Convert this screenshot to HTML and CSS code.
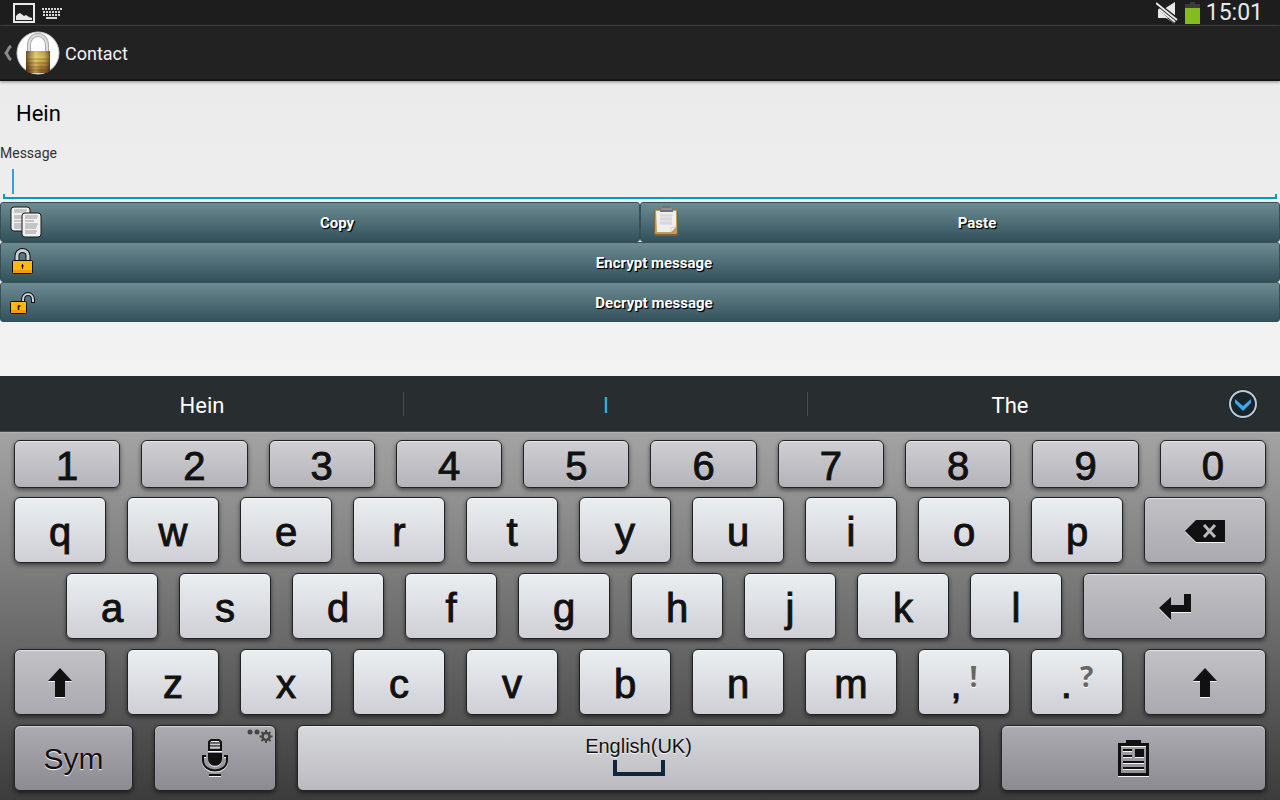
FILE: index.html
```html
<!DOCTYPE html>
<html lang="en">
<head>
<meta charset="utf-8">
<meta name="viewport" content="width=device-width, initial-scale=1">
<title>Contact</title>
<link rel="stylesheet" href="styles.css">
</head>
<body>
<div class="status-bar">
  <svg class="status-picture" width="22" height="20" viewBox="0 0 22 20"><path d="M1 1h20v18H1z" fill="none" stroke="#e8e8e8" stroke-width="2"/><path d="M3 17v-4l2-2 2-1 4 3 2-1 3 2 3 1v2z" fill="#e8e8e8"/></svg>
  <svg class="status-keyboard" width="20" height="12" viewBox="0 0 20 12" stroke="#d8d8d8" stroke-width="2"><path d="M0 2h20M1 5h18M1 8h18" stroke-dasharray="2 1"/><path d="M4 11h11"/></svg>
  <svg class="status-mute" width="22" height="22" viewBox="0 0 22 22"><path d="M2 7h6l11-7v22l-9-6H2z" fill="#e8e8e8"/><path d="M0 3L22 20" stroke="#1d1d1d" stroke-width="7"/><path d="M0 1l21 17M3 7l16 13" stroke="#e8e8e8" stroke-width="2"/><path d="M2 7l10 9H2z" fill="#e8e8e8"/></svg>
  <svg class="status-battery" width="15" height="22" viewBox="0 0 15 22"><path d="M0 2h5V0h5v2h5v5H0z" fill="#3b3b3b"/><path d="M0 6h15v16H0z" fill="#84bd17"/></svg>
  <time class="clock">15:01</time>
</div>
<header class="action-bar">
  <button class="back" type="button" aria-label="Back">
    <svg width="8" height="16" viewBox="0 0 8 16"><path d="M7 1C4 3 4 6 2 8c2 2 2 5 5 7" fill="none" stroke="#8b8b8b" stroke-width="3"/></svg>
    <svg width="44" height="44" viewBox="0 0 44 44">
      <defs>
        <linearGradient id="brass" x2="0" y2="1"><stop offset="0" stop-color="#ac8b35"/><stop offset=".3" stop-color="#cdb14e"/><stop offset=".6" stop-color="#a27623"/><stop offset="1" stop-color="#5a2807"/></linearGradient>
        <linearGradient id="sheen"><stop offset="0" stop-color="#3a1500" stop-opacity=".6"/><stop offset=".4" stop-color="#fff3a0" stop-opacity=".5"/><stop offset=".65" stop-color="#fff3a0" stop-opacity=".2"/><stop offset="1" stop-color="#3a1500" stop-opacity=".6"/></linearGradient>
      </defs>
      <circle cx="22" cy="22" r="21" fill="#fff" stroke="#c9c9c9"/>
      <path d="M13 21v-7a9 10 0 0 1 18 0v7" fill="none" stroke="#a9a9a9" stroke-width="4"/>
      <path d="M13 21v-7a9 10 0 0 1 18 0v7" fill="none" stroke="#dedede" stroke-width="2"/>
      <path d="M10 20h24v20l-3 2H13l-3-2z" fill="url(#brass)"/>
      <path d="M10 20h24v20l-3 2H13l-3-2z" fill="url(#sheen)"/>
      <path d="M10 28h24M10 32h24M10 36h24M10 39h24" stroke="#5e3309" opacity=".4"/>
    </svg>
  </button>
  <h1 class="title">Contact</h1>
</header>
<main class="content">
  <h2 class="contact-name">Hein</h2>
  <label class="message-label" for="message">Message</label>
  <div class="field"><input class="field-input" id="message" type="text"><span class="caret"></span></div>
  <div class="actions">
    <button class="action half" type="button">
      <svg width="32" height="32" viewBox="0 0 32 32"><g fill="#f1f1f1" stroke="#161616"><rect x="1" y="1" width="19" height="24" rx="3"/><path d="M4 4h13M4 6h12M4 10h11M4 12h10M4 15h12M4 18h12M4 20h11M4 22h12" stroke="#999"/><rect x="12" y="7" width="19" height="24" rx="3"/><path d="M15 10h13M15 12h12M15 15h9M15 18h13M15 20h12M15 22h11M15 25h12M15 27h11" stroke="#999"/></g></svg>
      <span class="action-text">Copy</span>
    </button>
    <button class="action half" type="button">
      <svg width="32" height="32" viewBox="0 0 32 32"><rect x="4" y="4" width="24" height="26" rx="2" fill="#806235"/><rect x="5" y="4" width="22" height="24" rx="1" fill="#c29b56"/><path d="M6 5h20v16l-5 5H7z" fill="#eee"/><path d="M10 9h12v10H10z" fill="#e0e0e0"/><path d="M10 9h12M10 13h12M10 17h12" stroke="#d0d0d0"/><path d="M21 26v-4l5-1z" fill="#fff" stroke="#ccc"/><path d="M10 2h3V0h7v2h3v4H10z" fill="#737373"/><path d="M11 3h11" stroke="#aaa"/></svg>
      <span class="action-text">Paste</span>
    </button>
    <button class="action" type="button">
      <svg width="26" height="28" viewBox="0 0 26 28"><g transform="translate(1 0)"><path d="M6 14V8a5 5 0 0 1 11 0v6" fill="none" stroke="#111" stroke-width="5"/><path d="M6 14V8a5 5 0 0 1 11 0v6" fill="none" stroke="#ccd2db" stroke-width="3"/><rect x="1.5" y="12.500" width="20" height="13" rx="1" fill="#ffb90a" stroke="#111"/><path d="M2 22h19v3H2z" fill="#f79a12"/><path d="M11.500 16v5M10 18h3" stroke="#221500"/></g></svg>
      <span class="action-text">Encrypt message</span>
    </button>
    <button class="action" type="button">
      <svg width="26" height="28" viewBox="0 0 26 28"><path d="M13 15v-3c0-8 10-8 10 0v3" fill="none" stroke="#111" stroke-width="4"/><path d="M13 15v-3c0-8 10-8 10 0v2" fill="none" stroke="#ccd2db" stroke-width="2"/><rect x=".5" y="13.500" width="16" height="12" rx="1" fill="#ffb90a" stroke="#111"/><path d="M1 22h15v3H1z" fill="#f79a12"/><path d="M8.500 22v-4h2" fill="none" stroke="#221500" stroke-width="1.500"/></svg>
      <span class="action-text">Decrypt message</span>
    </button>
  </div>
</main>
<div class="suggestions">
  <button class="suggestion" type="button">Hein</button>
  <button class="suggestion current" type="button">I</button>
  <button class="suggestion" type="button">The</button>
  <button class="expand" type="button" aria-label="More suggestions">
    <svg width="30" height="30" viewBox="0 0 30 30"><circle cx="15" cy="15" r="14.500" fill="#0d1519"/><circle cx="15" cy="15" r="13" fill="#18232a" stroke="#bacbd8" stroke-width="2"/><path d="M7 10l8 7 8-7v4l-8 8-8-8z" fill="#36a9ef"/></svg>
  </button>
</div>
<div class="keyboard">
  <div class="row digits">
    <button class="key digit" type="button">1</button><button class="key digit" type="button">2</button><button class="key digit" type="button">3</button><button class="key digit" type="button">4</button><button class="key digit" type="button">5</button><button class="key digit" type="button">6</button><button class="key digit" type="button">7</button><button class="key digit" type="button">8</button><button class="key digit" type="button">9</button><button class="key digit" type="button">0</button>
  </div>
  <div class="row">
    <button class="key" type="button">q</button><button class="key" type="button">w</button><button class="key" type="button">e</button><button class="key" type="button">r</button><button class="key" type="button">t</button><button class="key" type="button">y</button><button class="key" type="button">u</button><button class="key" type="button">i</button><button class="key" type="button">o</button><button class="key" type="button">p</button>
    <button class="key control side" type="button" aria-label="Backspace"><svg width="40" height="22" viewBox="0 0 40 22"><path d="M0 11L11 0h29v22H11z" fill="#111"/><path d="M19 5l11 12M30 5L19 17" stroke="#bab9bf" stroke-width="3"/></svg></button>
  </div>
  <div class="row indented">
    <button class="key" type="button">a</button><button class="key" type="button">s</button><button class="key" type="button">d</button><button class="key" type="button">f</button><button class="key" type="button">g</button><button class="key" type="button">h</button><button class="key" type="button">j</button><button class="key" type="button">k</button><button class="key" type="button">l</button>
    <button class="key control enter" type="button" aria-label="Enter"><svg width="32" height="26" viewBox="0 0 32 26"><path d="M0 14L12 3v8h13V0h7v18H12v8z" fill="#111"/></svg></button>
  </div>
  <div class="row">
    <button class="key control" type="button" aria-label="Shift"><svg width="24" height="30" viewBox="0 0 24 30"><path d="M12 0l12 13h-7v16H7V13H0z" fill="#111"/></svg></button>
    <button class="key" type="button">z</button><button class="key" type="button">x</button><button class="key" type="button">c</button><button class="key" type="button">v</button><button class="key" type="button">b</button><button class="key" type="button">n</button><button class="key" type="button">m</button>
    <button class="key punctuation" type="button"><span>,</span><span class="alternate">!</span></button>
    <button class="key punctuation" type="button"><span>.</span><span class="alternate">?</span></button>
    <button class="key control side" type="button" aria-label="Shift"><svg width="24" height="30" viewBox="0 0 24 30"><path d="M12 0l12 13h-7v16H7V13H0z" fill="#111"/></svg></button>
  </div>
  <div class="row">
    <button class="key dark sym" type="button">Sym</button>
    <button class="key dark side" type="button" aria-label="Voice input">
      <svg width="26" height="38" viewBox="0 0 26 38"><path d="M7 11V3l2-2h8l2 2v8z" fill="none" stroke="#111" stroke-width="2"/><path d="M8 4h10M8 7h10" stroke="#111"/><path d="M6 14h14v6c0 9-14 9-14 0z" fill="#111"/><path d="M4 17H1v4c0 14 24 14 24 0v-4h-3" fill="none" stroke="#111" stroke-width="2"/><path d="M7 36h12" stroke="#111" stroke-width="2"/></svg>
      <svg class="options" width="26" height="14" viewBox="0 0 26 14"><g fill="#454545"><circle cx="3" cy="3" r="2.500"/><circle cx="10" cy="3" r="2.500"/></g><circle cx="19" cy="7.500" r="3.500" fill="none" stroke="#454545" stroke-width="2.500"/><path d="M19 1v3M19 11v3M12.500 7.500h3M22.500 7.500h3M14.500 3l2 2M21.500 10l2 2M14.500 12l2-2M21.500 5l2-2" stroke="#454545" stroke-width="2"/></svg>
    </button>
    <button class="key space" type="button"><span>English(UK)</span><svg width="52" height="16" viewBox="0 0 52 16"><path d="M2 0v14h48V0" fill="none" stroke="#11263a" stroke-width="4"/></svg></button>
    <button class="key dark clipboard" type="button" aria-label="Clipboard"><svg width="31" height="37" viewBox="0 0 31 37"><path d="M8 0h15v4H8z" fill="#111"/><path d="M1.500 4.500h28v30h-28z" fill="none" stroke="#111" stroke-width="3"/><path d="M5 10h9M5 16h9M5 22h21M5 28h21" stroke="#111" stroke-width="2"/><path d="M17 9h9v8h-9z" fill="#111"/></svg></button>
  </div>
</div>
</body>
</html>
```
FILE: styles.css
```css
* { box-sizing: border-box; }

body {
  margin: 0;
  min-height: 100vh;
  display: flex;
  flex-direction: column;
  font-family: Roboto, "Noto Sans", sans-serif;
  color: #000;
  background: linear-gradient(#e8e8e8, #f4f4f4 400px);
}

button { font: inherit; border: 0; margin: 0; padding: 0; background: none; }
svg { display: block; flex: none; }

.status-bar {
  display: flex;
  align-items: center;
  height: 26px;
  padding: 0 17px 0 13px;
  background: #1d1d1d;
  border-bottom: 1px solid #2c2c2c;
}
.status-keyboard { margin-left: 7px; }
.status-mute { margin-left: auto; }
.status-battery { margin: 0 6px 0 7px; }
.clock { font-size: 23px; line-height: 24px; color: #e8e8e8; }

.action-bar {
  display: flex;
  align-items: center;
  height: 55px;
  padding: 0 4px;
  background: #222;
  border-bottom: 2px solid #141414;
  box-shadow: 0 1px 3px #888;
}
.back { display: flex; align-items: center; gap: 4px; }
.title { margin: 0 0 0 5px; padding-top: 2px; font-size: 18px; font-weight: 400; color: #f2f2f2; }

.content { flex: 1; }
.contact-name { margin: 0; padding: 17px 16px 0; font-size: 22px; line-height: 32px; font-weight: 400; }
.message-label { display: block; margin-top: 13px; font-size: 14px; line-height: 20px; color: #333; }

.field { position: relative; height: 39px; padding: 0 3px; }
.field-input {
  display: block;
  width: 100%;
  height: 36px;
  padding: 0 9px;
  border: 0;
  outline: 0;
  font: 18px Roboto, sans-serif;
  background:
    linear-gradient(#0099cc, #0099cc) bottom / 100% 2px no-repeat,
    linear-gradient(#0099cc, #0099cc) left bottom / 2px 5px no-repeat,
    linear-gradient(#0099cc, #0099cc) right bottom / 2px 5px no-repeat;
}
.caret { position: absolute; left: 12px; top: 6px; width: 2px; height: 25px; background: #2e9df7; }

.actions { display: flex; flex-wrap: wrap; }
.action {
  flex: 1 0 100%;
  display: flex;
  align-items: center;
  height: 40px;
  padding: 0 7px 0 9px;
  border: 1px solid #3a4f55;
  border-radius: 3px;
  background: linear-gradient(#6d8b92, #32525b);
  color: #fff;
  font-size: 15px;
  font-weight: 700;
  text-shadow: 1px 1px 1px #000, 1px 1px 0 #000;
}
.half { flex-basis: 50%; }
.action-text { flex: 1; padding-top: 2px; text-align: center; }

.suggestions { display: flex; height: 56px; background: #282d30; border-bottom: 1px solid #4c4b4e; }
.suggestion {
  flex: 1;
  color: #fff;
  font-size: 22px;
  padding-top: 4px;
  background: linear-gradient(#4a4e50, #4a4e50) right / 1px 24px no-repeat;
}
.suggestion:nth-child(3) { background: none; }
.current { color: #33b5e5; }
.expand { width: 68px; padding-right: 6px; display: grid; place-items: center; }

.keyboard {
  display: flex;
  flex-direction: column;
  gap: 10px;
  padding: 7px 14px 9px;
  border-top: 1px solid #b2b1b3;
  background: linear-gradient(#a3a3a3, #3c3c3c);
}
.row { display: flex; gap: 21px; height: 66px; }
.digits { height: 48px; margin-bottom: -1px; }
.indented { padding-left: 52px; }

.key {
  flex: 90 1 0;
  min-width: 0;
  display: flex;
  align-items: center;
  justify-content: center;
  padding-top: 4px;
  border: 1px solid #222;
  border-radius: 6px;
  background: linear-gradient(#eaeff1, #cfcfd5);
  box-shadow: 0 2px 4px #0008, inset 0 1px 1px #fff8;
  font-family: "Liberation Sans", sans-serif;
  font-size: 40px;
  line-height: 44px;
  color: #111;
  text-shadow: 0 1px 1px #fff;
  -webkit-text-stroke: 1px #111;
}
.key svg { filter: drop-shadow(0 1px 0 #f5f5f5); }
.digit { background: linear-gradient(#d0cfd4, #b4b3b9); }
.control { padding-top: 2px; background: linear-gradient(#c2c1c6, #aaa9af); }
.dark { position: relative; padding-top: 0; background: linear-gradient(#acabb1, #8d8b92); }
.side { flex-grow: 120; }
.enter { flex-grow: 181; }
.sym { flex-grow: 117; padding-top: 2px; font-size: 30px; -webkit-text-stroke: 0; }
.clipboard { flex-grow: 263; }
.space {
  flex-grow: 681;
  flex-direction: column;
  gap: 2px;
  padding: 0 0 6px;
  background: linear-gradient(#d8d9dc, #bbbac0);
  font-size: 20px;
  line-height: 24px;
  -webkit-text-stroke: 0;
}
.space svg, .key .options { filter: none; }
.options { position: absolute; top: 3px; right: 2px; }
.punctuation { gap: 8px; }
.alternate { align-self: flex-start; font: 700 28px/44px "Open Sans", sans-serif; color: #666; -webkit-text-stroke: 0; }
```
